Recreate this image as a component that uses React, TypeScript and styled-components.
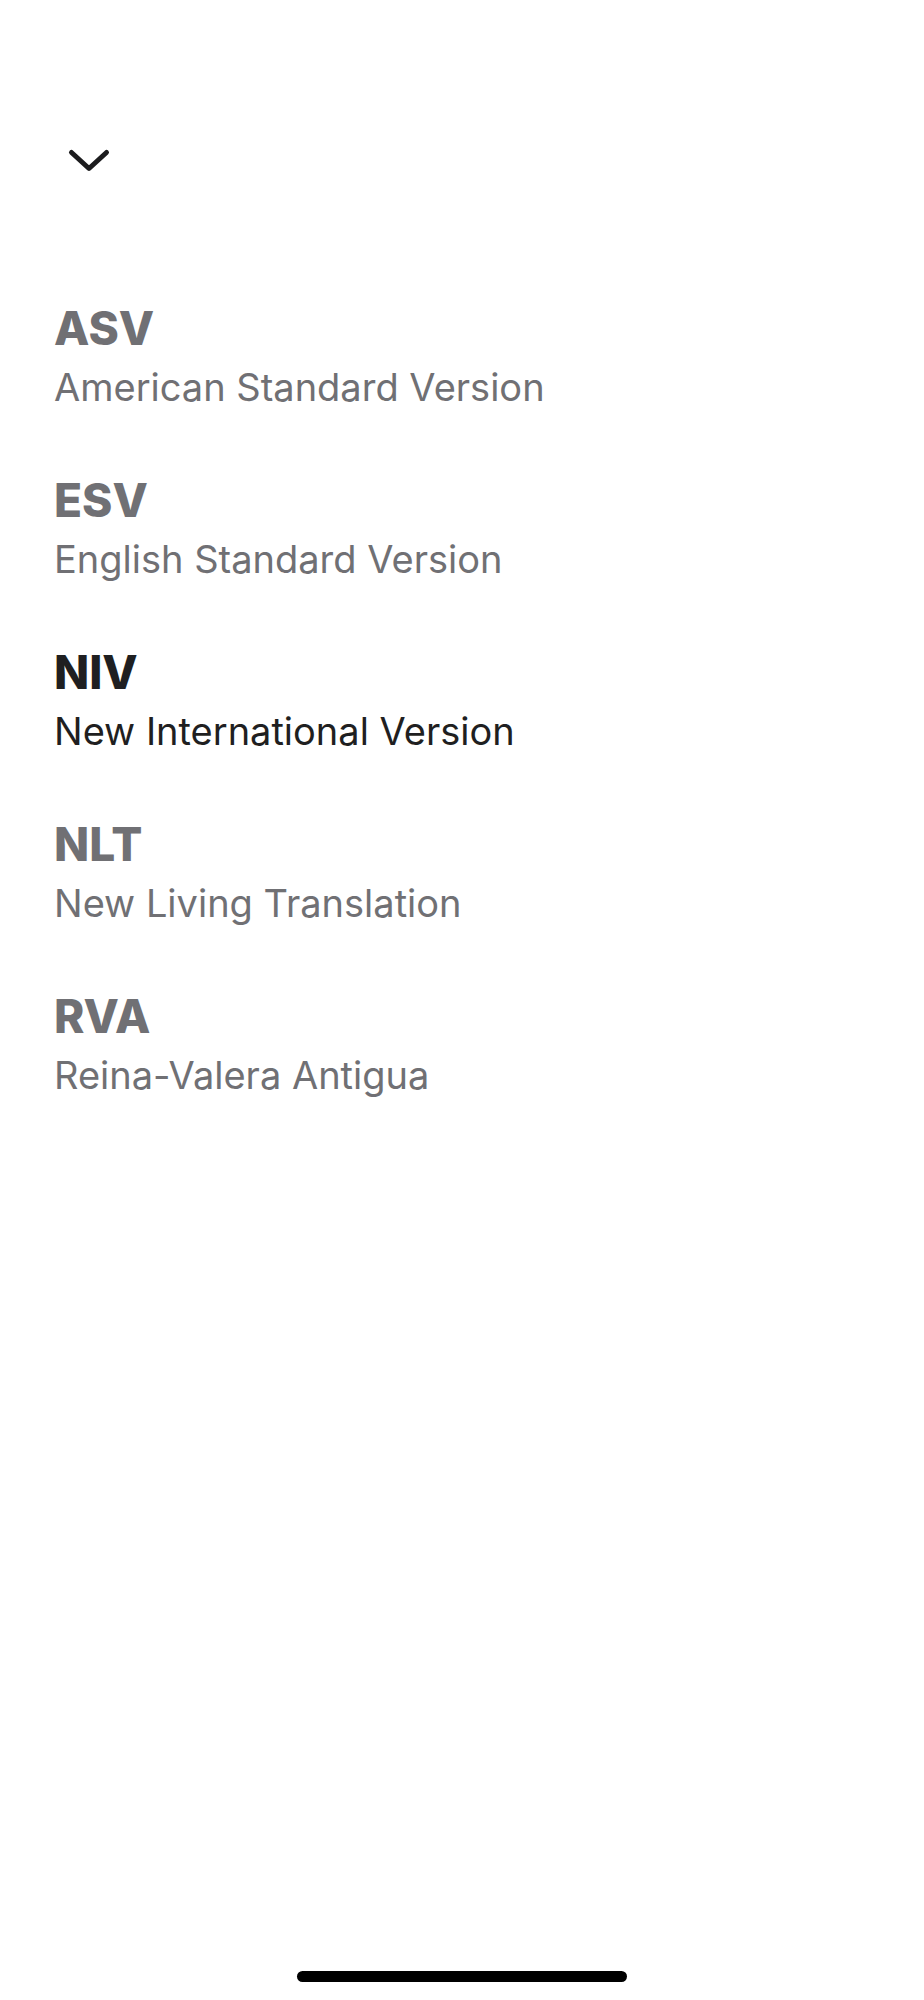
import styled, { createGlobalStyle } from 'styled-components';

const versions = [
    { code: 'ASV', name: 'American Standard Version' },
    { code: 'ESV', name: 'English Standard Version' },
    { code: 'NIV', name: 'New International Version' },
    { code: 'NLT', name: 'New Living Translation' },
    { code: 'RVA', name: 'Reina-Valera Antigua' },
];

const selected = 'NIV';

export default function App() {
    return (
        <>
            <GlobalStyle />
            <Screen>
                <Header>
                    <CloseButton aria-label="Close">
                        <svg width="44" height="28" viewBox="0 0 44 28" fill="none">
                            <path
                                d="M4.5 4.5 L22 20.5 L39.5 4.5"
                                stroke="#1c1c1e"
                                strokeWidth="5"
                                strokeLinecap="round"
                                strokeLinejoin="round"
                            />
                        </svg>
                    </CloseButton>
                </Header>
                <VersionList>
                    {versions.map((v) => (
                        <VersionItem key={v.code} $active={v.code === selected}>
                            <VersionCode>{v.code}</VersionCode>
                            <VersionName>{v.name}</VersionName>
                        </VersionItem>
                    ))}
                </VersionList>
                <HomeIndicator />
            </Screen>
        </>
    );
}

const GlobalStyle = createGlobalStyle`
  * {
    box-sizing: border-box;
  }

  body {
    margin: 0;
    background: #ffffff;
    font-family: Inter, "Liberation Sans", sans-serif;
  }
`;

const Screen = styled.div`
  width: 924px;
  min-height: 2000px;
  display: flex;
  flex-direction: column;
  background: #ffffff;
`;

const Header = styled.header`
  padding: 148px 0 0 67px;
  height: 304px;
`;

const CloseButton = styled.button`
  display: block;
  padding: 0;
  border: none;
  background: none;
  width: 44px;
  height: 28px;
  cursor: pointer;

  svg {
    display: block;
  }
`;

const VersionList = styled.ul`
  list-style: none;
  margin: 0;
  padding: 0 0 0 54px;
  display: flex;
  flex-direction: column;
  gap: 65px;
`;

const VersionItem = styled.li<{ $active: boolean }>`
  display: flex;
  flex-direction: column;
  gap: 11px;
  color: ${({ $active }) => ($active ? '#1f1f21' : '#707074')};
`;

const VersionCode = styled.span`
  font-size: 46px;
  line-height: 48px;
  font-weight: 800;
`;

const VersionName = styled.span`
  font-size: 38px;
  line-height: 48px;
  font-weight: 400;
`;

const HomeIndicator = styled.div`
  margin: auto auto 18px;
  width: 330px;
  height: 11px;
  border-radius: 6px;
  background: #000000;
`;
